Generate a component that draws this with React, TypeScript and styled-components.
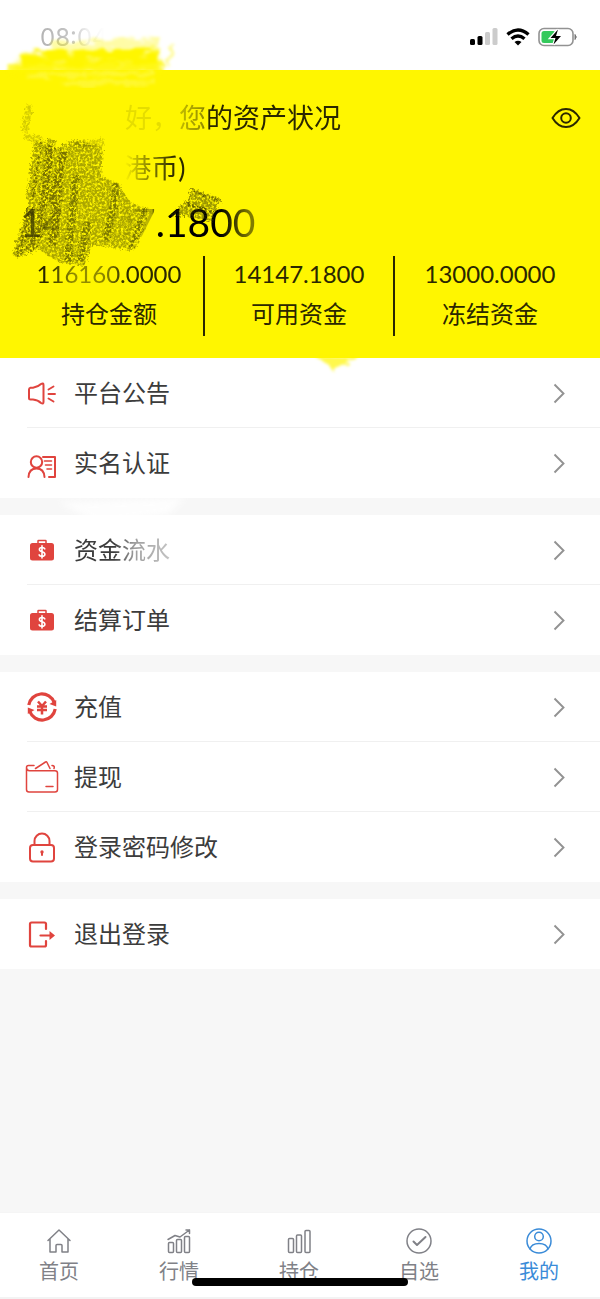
import React from 'react';
import styled, { createGlobalStyle } from 'styled-components';

const RED = '#e0443e';
const YELLOW = '#fff600';

const GlobalStyle = createGlobalStyle`
  * { box-sizing: border-box; }
  body {
    margin: 0;
    background: #f7f7f7;
    font-family: Lato, "Noto Sans CJK SC", sans-serif;
  }
`;

const Page = styled.div`
  position: relative;
  display: flex;
  flex-direction: column;
  min-height: 100vh;
`;

const StatusBar = styled.header`
  display: flex;
  justify-content: space-between;
  height: 70px;
  padding: 22px 22px 0 40px;
  background: #fff;
`;

const Clock = styled.time`
  font: 24px/32px Inter, sans-serif;
  color: #b4b4b4;
  mask-image: linear-gradient(90deg, #000 0, rgba(0, 0, 0, 0.75) 50%, rgba(0, 0, 0, 0.2) 70%, transparent 96%);
`;

const StatusIcons = styled.div`
  display: flex;
  align-items: center;
  gap: 8px;
  height: 30px;
`;

const Summary = styled.section`
  position: relative;
  padding: 23px 15px 22px;
  background: ${YELLOW};
  color: #2a2700;
`;

const TitleRow = styled.div`
  display: flex;
  align-items: center;
  justify-content: space-between;
  height: 50px;
  padding: 0 4px 0 110px;
`;

const Title = styled.h1`
  margin: 0;
  font-size: 27px;
  line-height: 50px;
  font-weight: 400;
  mask-image: linear-gradient(90deg, rgba(0, 0, 0, 0.12) 0 50px, rgba(0, 0, 0, 0.3) 56px, rgba(0, 0, 0, 0.5) 78px, #000 82px);
`;

const EyeButton = styled.button`
  display: flex;
  padding: 0;
  border: 0;
  background: none;
  color: inherit;
`;

const Currency = styled.div`
  width: max-content;
  margin-left: 102px;
  font-size: 27px;
  line-height: 50px;
  mask-image: linear-gradient(90deg, transparent 8px, rgba(0, 0, 0, 0.4) 24px, #000 58px);
`;

const Total = styled.div`
  width: max-content;
  margin: 0 0 5px 5px;
  font-size: 39px;
  line-height: 58px;
  color: #000;
  mask-image: linear-gradient(90deg, rgba(0, 0, 0, 0.6) 0 20px, rgba(0, 0, 0, 0.2) 34px, transparent 46px 92px, rgba(0, 0, 0, 0.1) 110px, rgba(0, 0, 0, 0.3) 132px, #000 136px 200px, rgba(0, 0, 0, 0.5) 230px);
`;

const Stats = styled.dl`
  display: grid;
  grid-template-columns: repeat(3, 1fr);
  margin: 0;
`;

const Stat = styled.div`
  display: flex;
  flex-direction: column;
  height: 80px;
  text-align: center;
  font-size: 24px;
  &:not(:last-child) { border-right: 2px solid #2a2700; }
`;

const StatLabel = styled.dt`
  order: 2;
  line-height: 44px;
`;

const StatValue = styled.dd<{ $worn?: boolean }>`
  margin: 0;
  line-height: 36px;
  ${p => p.$worn && 'mask-image: linear-gradient(90deg, #000 30px, rgba(0,0,0,.5) 60px, rgba(0,0,0,.55) 92px, #000 110px);'}
`;

const Smear = styled.svg`
  position: absolute;
  top: 0;
  left: 0;
  pointer-events: none;
`;

const Menu = styled.main`
  flex: 1;
  display: flex;
  flex-direction: column;
  gap: 17px;
  padding-bottom: 20px;
`;

const Group = styled.nav`
  background: #fff;
`;

const Row = styled.a`
  position: relative;
  display: grid;
  grid-template-columns: 34px 1fr 14px;
  align-items: center;
  column-gap: 15px;
  height: 70px;
  padding: 0 34px 0 25px;
  color: #3c3c3c;
  text-decoration: none;
  &:not(:last-child)::after {
    content: "";
    position: absolute;
    left: 27px;
    right: 0;
    bottom: 0;
    height: 1px;
    background: #f0f0f0;
  }
`;

const RowLabel = styled.span<{ $worn?: boolean }>`
  font-size: 24px;
  line-height: 36px;
  ${p => p.$worn && 'mask-image: linear-gradient(90deg, #000 40px, rgba(0,0,0,.5) 60px, rgba(0,0,0,.3) 96px);'}
`;

const TabBar = styled.nav`
  display: grid;
  grid-template-columns: repeat(5, 1fr);
  height: 87px;
  background: #fff;
  border-top: 1px solid #f5f5f5;
  border-bottom: 2px solid #f3f3f3;
`;

const Tab = styled.a<{ $active?: boolean }>`
  display: flex;
  flex-direction: column;
  align-items: center;
  gap: 1px;
  padding: 14px 2px 0 0;
  font-size: 20px;
  line-height: 30px;
  color: ${p => (p.$active ? '#3a8bd8' : '#808187')};
  text-decoration: none;
`;

const HomeIndicator = styled.div`
  position: absolute;
  bottom: 13px;
  left: 50%;
  width: 36%;
  height: 8px;
  border-radius: 4px;
  background: #000;
  transform: translateX(-50%);
`;

const line = { fill: 'none', stroke: 'currentColor', strokeLinecap: 'round', strokeLinejoin: 'round' } as const;

const Icon = ({ children }: { children: React.ReactNode }) => (
  <svg width="34" height="34" viewBox="0 0 34 34" color={RED} {...line} strokeWidth="2" aria-hidden>
    {children}
  </svg>
);

const HornIcon = () => (
  <Icon>
    <path d="M4 13.500Q4 12 5.500 11.700H8Q13 11 16 8Q18.500 6.500 18.500 9V26Q18.500 28.500 16 27Q13 24 8 23.500H5.500Q4 23.500 4 22Z" />
    <path d="M23.500 13.500L28.500 10.500M23.500 18H30M23.500 22.500L28.500 25.500" strokeWidth="1.900" />
  </Icon>
);

const IdIcon = () => (
  <Icon>
    <circle cx="11.500" cy="16" r="5.700" />
    <path d="M3.500 31Q4 22.500 11.500 22.500T19.500 31M18 11H30V31H24" />
    <path d="M19.500 15H26.500M20.500 19H26.500M22 23H26.500" strokeWidth="1.600" />
  </Icon>
);

const CaseIcon = () => (
  <Icon>
    <path d="M13 11V8Q13 7.500 13.500 7.500H20.500Q21 7.500 21 8V11" strokeWidth="1.500" />
    <rect x="6" y="11" width="22" height="15.500" rx="1.500" fill="currentColor" />
    <path d="M19.800 15.800Q19.200 14.500 17 14.500Q14.400 14.500 14.400 16.500Q14.400 18.100 17 18.700Q19.900 19.300 19.900 21.300Q19.900 23.300 17 23.300Q14.700 23.300 14.100 21.900M17 12.800V25" stroke="#fff" strokeWidth="1.600" />
  </Icon>
);

const RechargeIcon = () => (
  <Icon>
    <g strokeWidth="3.200" strokeLinecap="butt">
      <path d="M3.800 15A13.200 13.200 0 0 1 29.200 12.500" />
      <path d="M30.200 19A13.200 13.200 0 0 1 4.800 21.500" />
    </g>
    <path d="M31.200 16.500V10L24.500 14ZM2.800 17.500V24L9.500 20Z" fill="currentColor" stroke="none" />
    <path d="M13 11.500L17 16L21 11.500M12 16.500H22M12 20H22M17 16V24.500" strokeWidth="2.500" strokeLinecap="butt" />
  </Icon>
);

const WalletIcon = () => (
  <Icon>
    <g strokeWidth="1.500">
      <path d="M9 5.500H3.500Q1.500 5.500 1.500 7.500V29.500Q1.500 32 4 32H30Q32.500 32 32.500 29.500V13Q32.500 10.700 30 10.700H4.500Q1.500 10.700 1.500 7.500" />
      <path d="M10.500 8.500L20.500 2Q21.500 1.500 22 2.500L25 8.500M27 5.500Q30 5.500 29 8.500M21 26.500H28" />
    </g>
  </Icon>
);

const LockIcon = () => (
  <Icon>
    <rect x="5" y="15" width="24" height="16.500" rx="3" />
    <path d="M9.500 15V11A7.500 7.500 0 0 1 24.500 11V15" />
    <circle cx="17" cy="22" r="1" fill="currentColor" strokeWidth="1.400" />
    <path d="M17 22V25" />
  </Icon>
);

const LogoutIcon = () => (
  <Icon>
    <path d="M21 12V7Q21 5.500 19.500 5.500H6.500Q5 5.500 5 7V28Q5 29.500 6.500 29.500H19.500Q21 29.500 21 28V24" strokeWidth="2.200" />
    <path d="M15.500 18.500H27" strokeWidth="2.200" />
    <path d="M24.500 14L30 18.500L24.500 23Z" fill="currentColor" stroke="none" />
  </Icon>
);

const Chevron = () => (
  <svg width="14" height="22" viewBox="0 0 14 22" aria-hidden>
    <path d="M2.500 2.500L11.500 11.500L2.500 20.500" fill="none" stroke="#929292" strokeWidth="1.900" />
  </svg>
);

const TabIcon = ({ children }: { children: React.ReactNode }) => (
  <svg width="28" height="28" viewBox="0 0 28 28" {...line} strokeWidth="1.500" aria-hidden>
    {children}
  </svg>
);

const groups = [
  [
    { label: '平台公告', icon: <HornIcon /> },
    { label: '实名认证', icon: <IdIcon /> },
  ],
  [
    { label: '资金流水', icon: <CaseIcon />, worn: true },
    { label: '结算订单', icon: <CaseIcon /> },
  ],
  [
    { label: '充值', icon: <RechargeIcon /> },
    { label: '提现', icon: <WalletIcon /> },
    { label: '登录密码修改', icon: <LockIcon /> },
  ],
  [{ label: '退出登录', icon: <LogoutIcon /> }],
] as { label: string; icon: React.ReactNode; worn?: boolean }[][];

const stats = [
  { label: '持仓金额', value: '116160.0000', worn: true },
  { label: '可用资金', value: '14147.1800' },
  { label: '冻结资金', value: '13000.0000' },
];

const tabs = [
  { label: '首页', icon: <path d="M3 13.500L14 3L25 13.500M5 12V25H11V18.500Q11 17.500 12 17.500H16Q17 17.500 17 18.500V25H23V12" /> },
  {
    label: '行情',
    icon: (
      <>
        <rect x="3.500" y="15.500" width="5" height="10" rx="1" />
        <rect x="11.500" y="12.500" width="5" height="13" rx="1" />
        <rect x="19.500" y="9.500" width="5" height="16" rx="1" />
        <path d="M3 12.500L10 8.500L15 10L24.500 3M21 3H24.500V6.500" />
      </>
    ),
  },
  {
    label: '持仓',
    icon: (
      <>
        <rect x="3.500" y="11.500" width="5" height="14" rx="1" />
        <rect x="11.500" y="8" width="5" height="17.500" rx="1" />
        <rect x="20" y="3.500" width="5" height="22" rx="1" />
      </>
    ),
  },
  {
    label: '自选',
    icon: (
      <>
        <circle cx="14" cy="14" r="12" />
        <path d="M8.500 14.500L12 18L20.500 10" strokeWidth="2" />
      </>
    ),
  },
  {
    label: '我的',
    active: true,
    icon: (
      <>
        <circle cx="14" cy="14" r="12" />
        <circle cx="14" cy="9.500" r="4.300" />
        <path d="M5 22Q6.500 16.500 14 16.500T23 22" />
      </>
    ),
  },
] as { label: string; icon: React.ReactNode; active?: boolean }[];

const Scribbles = () => (
  <Smear width="360" height="540" viewBox="0 0 360 540" fill="none" aria-hidden>
    <defs>
      <filter id="grain" x="-10%" y="-10%" width="120%" height="120%">
        <feTurbulence type="fractalNoise" baseFrequency="0.42" numOctaves="4" seed="4" result="n" />
        <feColorMatrix in="n" values="0 0 0 0 0  0 0 0 0 0  0 0 0 0 0  3.200 0 0 0 -0.900" result="g" />
        <feDisplacementMap in="SourceGraphic" in2="n" scale="7" result="d" />
        <feComposite in="d" in2="g" operator="in" result="c" />
        <feGaussianBlur in="c" stdDeviation="0.7" />
      </filter>
      <filter id="brush" x="-10%" y="-30%" width="120%" height="160%">
        <feTurbulence type="fractalNoise" baseFrequency="0.06 0.14" numOctaves="3" seed="9" result="n" />
        <feDisplacementMap in="SourceGraphic" in2="n" scale="9" result="d" />
        <feColorMatrix in="n" values="0 0 0 0 0  0 0 0 0 0  0 0 0 0 0  4 0 0 0 -0.700" result="g" />
        <feComposite in="d" in2="g" operator="in" result="c" />
        <feGaussianBlur in="c" stdDeviation="1.400" />
      </filter>
      <filter id="soft" x="-20%" y="-60%" width="140%" height="220%" filterUnits="objectBoundingBox">
        <feGaussianBlur stdDeviation="3" />
      </filter>
    </defs>
    <path d="M24 56L156 53L162 72L10 72Z" fill={YELLOW} opacity="0.75" filter="url(#soft)" />
    <g filter="url(#brush)" stroke={YELLOW}>
      <path d="M20 58L158 56" strokeWidth="15" />
      <path d="M8 70L164 68" strokeWidth="12" opacity="0.7" />
      <path d="M52 48L160 42" strokeWidth="12" opacity="0.35" />
      <path d="M168 66L173 44" strokeWidth="4" opacity="0.4" />
      <path d="M320 358L354 358L346 364L334 370L330 364Z" fill={YELLOW} strokeWidth="3" opacity="0.7" />
    </g>
    <path d="M26 76L155 73M60 84L156 82" stroke="#fffb78" strokeWidth="5" opacity="0.4" filter="url(#brush)" />
    <g filter="url(#grain)" stroke="#292500">
      <path d="M41 140L30 200L16 258L38 249L58 262L84 266L92 245L112 248L132 250L148 208L132 204L116 182L101 177L103 147L74 140L56 148Z" fill="#3a3500" stroke="none" opacity="0.42" />
      <path d="M38 142L30 200M52 139L38 236M64 150L52 204M32 207L16 256M46 218L28 252M60 176L52 246" strokeWidth="8" opacity="0.4" />
      <path d="M118 183L106 240M147 208L132 248M76 175L68 262M88 222L80 262" strokeWidth="7" opacity="0.35" />
      <path d="M24 136L42 140M30 105L24 132M74 145L104 142" strokeWidth="7" opacity="0.2" />
      <path d="M190 190L220 200L212 222L186 216L172 216L188 204Z" fill="#3a3500" stroke="none" opacity="0.5" />
      <path d="M192 190L222 201M184 203L214 212M172 216L186 203" strokeWidth="3" opacity="0.5" />
    </g>
    <path d="M66 504L180 500L168 512L100 522Z" fill="#fff" stroke="#fff" strokeWidth="4" opacity="0.8" filter="url(#soft)" />
  </Smear>
);

export default function App() {
  return (
    <Page>
      <GlobalStyle />
      <StatusBar>
        <Clock>08:04</Clock>
        <StatusIcons>
          <svg width="28" height="18" viewBox="0 0 28 18" aria-label="信号">
            <rect x="0" y="11" width="5" height="6" rx="1.500" fill="#000" />
            <rect x="7.500" y="8" width="5" height="9" rx="1.500" fill="#000" />
            <rect x="15" y="4" width="5" height="13" rx="1.500" fill="#ccc" />
            <rect x="22.500" y="0" width="5" height="17" rx="1.500" fill="#ccc" />
          </svg>
          <svg width="24" height="18" viewBox="0 0 24 18" fill="none" stroke="#000" strokeWidth="3.400" aria-label="无线网络">
            <path d="M1.500 6.500Q12 -2.500 22.500 6.500" />
            <path d="M5.500 10.700Q12 5.200 18.500 10.700" />
            <path d="M8.500 14Q12 11.500 15.500 14L12 17.500Z" fill="#000" stroke="none" />
          </svg>
          <svg width="40" height="20" viewBox="0 0 40 20" aria-label="充电中">
            <rect x="1" y="1.500" width="34" height="17" rx="5" fill="#fff" stroke="#929292" strokeWidth="1.600" />
            <rect x="3.500" y="4" width="14" height="12" rx="2.500" fill="#34c95c" />
            <path d="M37 7.500Q39.500 10 37 12.500Z" fill="#777" stroke="#777" />
            <path d="M20 2.500L12.500 11H17.500L15.500 17.500L23 9H18Z" fill="#000" stroke="#fff" strokeWidth="2.500" paintOrder="stroke" />
          </svg>
        </StatusIcons>
      </StatusBar>

      <Summary>
        <TitleRow>
          <Title>好，您的资产状况</Title>
          <EyeButton type="button" aria-label="显示或隐藏金额">
            <svg width="30" height="22" viewBox="0 0 30 22" {...line} strokeWidth="2">
              <path d="M1.500 11Q7 2 15 2T28.500 11Q23 20 15 20T1.500 11Z" />
              <circle cx="15" cy="11" r="4.800" />
            </svg>
          </EyeButton>
        </TitleRow>
        <Currency>(港币)</Currency>
        <Total>143307.1800</Total>
        <Stats>
          {stats.map(s => (
            <Stat key={s.label}>
              <StatLabel>{s.label}</StatLabel>
              <StatValue $worn={s.worn}>{s.value}</StatValue>
            </Stat>
          ))}
        </Stats>
      </Summary>

      <Menu>
        {groups.map((rows, i) => (
          <Group key={i}>
            {rows.map(r => (
              <Row href="#" key={r.label}>
                {r.icon}
                <RowLabel $worn={r.worn}>{r.label}</RowLabel>
                <Chevron />
              </Row>
            ))}
          </Group>
        ))}
      </Menu>

      <TabBar>
        {tabs.map(t => (
          <Tab href="#" key={t.label} $active={t.active}>
            <TabIcon>{t.icon}</TabIcon>
            {t.label}
          </Tab>
        ))}
      </TabBar>
      <HomeIndicator />
      <Scribbles />
    </Page>
  );
}
